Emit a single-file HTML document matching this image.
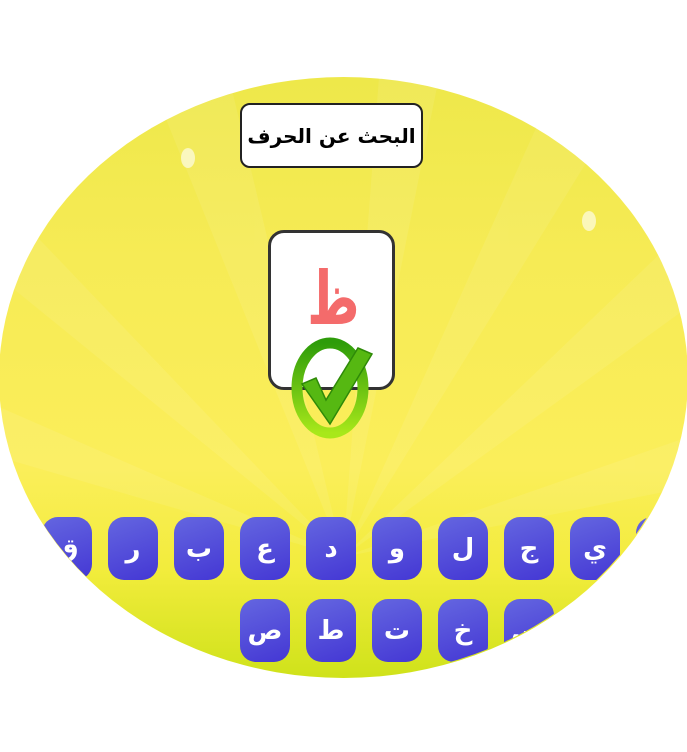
<!DOCTYPE html>
<html><head><meta charset="utf-8"><style>
body{margin:0;width:687px;height:752px;background:#fff;overflow:hidden;position:relative;font-family:"Liberation Sans","DejaVu Sans",sans-serif}
#oval{position:absolute;left:-1px;top:77px;width:689px;height:601px;border-radius:50%;overflow:hidden;
background:linear-gradient(180deg,#eee84a 0%,#f6eb55 30%,#fbee5a 65%,#f2ec3c 82%,#cfe21a 100%)}
.rays{position:absolute;left:0;top:0;width:100%;height:100%}
.box{position:absolute;background:#fff;border:2px solid #222;box-sizing:border-box}
.key{position:absolute;width:50px;height:63px;border-radius:16px;background:linear-gradient(160deg,#6466e0,#4437d4);color:#fff;font-size:26px;font-weight:bold;display:flex;align-items:center;justify-content:center;box-sizing:border-box;font-family:"DejaVu Sans",sans-serif}
</style></head><body>
<div id="oval">
<svg class="rays" viewBox="0 0 689 601">
<g fill="#fff" opacity="0.08">
<polygon points="344,480 150,0 230,0"/>
<polygon points="344,480 380,0 440,0"/>
<polygon points="344,480 560,0 640,0"/>
<polygon points="344,480 0,120 0,200"/>
<polygon points="344,480 689,150 689,230"/>
<polygon points="344,480 0,330 0,380"/>
<polygon points="344,480 689,360 689,410"/>
</g>
<ellipse cx="189" cy="81" rx="7" ry="10" fill="#fff" opacity="0.6"/>
<ellipse cx="590" cy="144" rx="7" ry="10" fill="#fff" opacity="0.6"/>
</svg>
</div>
<div class="box" style="left:240px;top:103px;width:183px;height:65px;border-radius:10px;display:flex;align-items:center;justify-content:center;font-size:20px;font-weight:bold;font-family:'DejaVu Sans',sans-serif;white-space:nowrap;direction:rtl">البحث عن الحرف</div>
<div class="box" style="left:268px;top:230px;width:127px;height:160px;border-radius:16px;border-width:3px;border-color:#333"></div>
<div style="position:absolute;left:296px;top:254px;width:70px;text-align:center;color:#f46b6b;font-size:74px;line-height:90px;font-weight:bold;font-family:'DejaVu Sans',sans-serif;transform:scaleX(0.68)">ظ</div>
<svg style="position:absolute;left:286px;top:328px" width="94" height="112" viewBox="0 0 94 112">
<defs><linearGradient id="g" x1="0" y1="0" x2="0" y2="1"><stop offset="0" stop-color="#2e9c0a"/><stop offset="1" stop-color="#a8e81a"/></linearGradient></defs>
<ellipse cx="44" cy="60" rx="33" ry="45" fill="none" stroke="url(#g)" stroke-width="11"/>
<path d="M16 56 L30 50 L40 72 L72 20 L86 26 L44 96 Z" fill="#56b812" stroke="#2e8a08" stroke-width="1.5"/>
</svg>
<div style="position:absolute;left:0;top:0;width:687px;height:752px;clip-path:ellipse(344px 300px at 343px 377px)">
<div class="key" style="left:42px;top:517px">ق</div>
<div class="key" style="left:108px;top:517px">ر</div>
<div class="key" style="left:174px;top:517px">ب</div>
<div class="key" style="left:240px;top:517px">ع</div>
<div class="key" style="left:306px;top:517px">د</div>
<div class="key" style="left:372px;top:517px">و</div>
<div class="key" style="left:438px;top:517px">ل</div>
<div class="key" style="left:504px;top:517px">ج</div>
<div class="key" style="left:570px;top:517px">ي</div>
<div class="key" style="left:636px;top:517px">س</div>
<div class="key" style="left:240px;top:599px">ص</div>
<div class="key" style="left:306px;top:599px">ط</div>
<div class="key" style="left:372px;top:599px">ت</div>
<div class="key" style="left:438px;top:599px">خ</div>
<div class="key" style="left:504px;top:599px">س</div>
</div>
</body></html>
